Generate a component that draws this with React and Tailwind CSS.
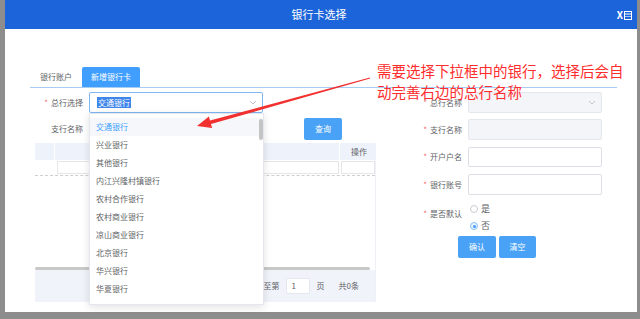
import React from "react";

// bank list shown in the open dropdown
const banks = [
  "交通银行",
  "兴业银行",
  "其他银行",
  "内江兴隆村镇银行",
  "农村合作银行",
  "农村商业银行",
  "凉山商业银行",
  "北京银行",
  "华兴银行",
  "华夏银行",
];

function Chevron({ className }) {
  return (
    <svg width="8" height="5" viewBox="0 0 8 5" className={className}>
      <path d="M1 1 L4 4 L7 1" fill="none" stroke="#c0c4cc" strokeWidth="1" />
    </svg>
  );
}

function FormLabel({ text, w }) {
  return (
    <div className={`${w} shrink-0 text-right text-[8px] text-[#606266] leading-none whitespace-nowrap`}>
      <span className="text-[#f56c6c] mr-[3px]">*</span>
      {text}
    </div>
  );
}

function RightRow({ label, disabled, select, h, mb }) {
  return (
    <div className={`flex items-center ${mb}`}>
      <FormLabel text={label} w="w-[48px]" />
      <div
        className={`ml-[6px] w-[134px] ${h} rounded-[2px] border flex items-center justify-end pr-[5px] ${
          disabled ? "bg-[#f3f5f9] border-[#e4e7ed]" : "bg-white border-[#dcdfe6]"
        }`}
      >
        {select && <Chevron />}
      </div>
    </div>
  );
}

export default function App() {
  return (
    <div className="w-[640px] h-[319px] bg-[#8d8d8d] pl-[5px] pr-[3px] overflow-hidden font-['Noto_Sans_CJK_SC',sans-serif]">
      <div className="h-[312px] bg-white flex flex-col">
        {/* title bar */}
        <div className="h-[29px] shrink-0 bg-[#1c64d9] relative flex items-center justify-center">
          <span className="text-white text-[11px] ml-[-4px]">银行卡选择</span>
          <div className="absolute right-[5px] top-[10px] flex items-center gap-[1px]">
            <span className="text-white text-[10px] font-bold leading-none">X</span>
            <svg width="8" height="9" viewBox="0 0 8 9">
              <rect x="0.5" y="0.5" width="7" height="8" fill="none" stroke="#fff" strokeWidth="1" />
              <line x1="0.5" y1="3" x2="7.5" y2="3" stroke="#fff" strokeWidth="1" />
              <line x1="0.5" y1="5.5" x2="7.5" y2="5.5" stroke="#fff" strokeWidth="0.6" />
            </svg>
          </div>
        </div>

        {/* body */}
        <div className="relative flex-1 pl-[25px] pt-[38px]">
          {/* tabs */}
          <div className="w-[587px] h-[21px] flex items-end border-b border-[#a8cdf4]">
            <div className="w-[52px] h-[20px] flex items-center justify-center text-[8px] text-[#606266]">
              银行账户
            </div>
            <div className="w-[58px] h-[20px] flex items-center justify-center text-[8px] text-white bg-[#409eff] rounded-t-[2px]">
              新增银行卡
            </div>
          </div>

          <div className="flex mt-[4px]">
            {/* left column */}
            <div className="w-[346px] shrink-0">
              <div className="flex items-center h-[21px]">
                <FormLabel text="总行选择" w="w-[53px]" />
                <div className="ml-[6px] w-[174px] h-[21px] rounded-[2px] border border-[#7fb7f2] bg-white flex items-center justify-between pl-[7px] pr-[5px]">
                  <span className="bg-[#3f86ea] text-white text-[8px] leading-[11px] px-[1px]">交通银行</span>
                  <Chevron />
                </div>
              </div>

              <div className="flex items-center h-[22px] mt-[5px]">
                <div className="w-[53px] shrink-0 text-right text-[8px] text-[#606266] whitespace-nowrap">支行名称</div>
                <div className="ml-[6px] w-[174px] h-[21px] rounded-[2px] border border-[#dcdfe6] bg-white" />
                <div className="ml-[41px] w-[38px] h-[22px] rounded-[2px] bg-[#4aa2f7] text-white text-[8px] flex items-center justify-center">
                  查询
                </div>
              </div>

              {/* table */}
              <div className="ml-[5px] mt-[3px] w-[341px] border-r border-[#eef1f6]">
                <div className="flex h-[17px] bg-[#eef3fb]">
                  <div className="w-[20px] border-r border-white" />
                  <div className="w-[285px] border-r border-white" />
                  <div className="flex-1 flex items-center justify-end pr-[8px] text-[8px] text-[#606266]">操作</div>
                </div>
                <div className="flex h-[16px] border-b border-dashed border-[#cfcfcf] py-[1px] gap-[2px]">
                  <div className="w-[20px]" />
                  <div className="w-[282px] border border-[#e6e6e6]" />
                  <div className="flex-1 border border-[#e6e6e6]" />
                </div>
                <div className="h-[91px]" />
                <div className="h-[3px] w-[335px] rounded-full bg-[#c9c9c9]" />
                <div className="h-[32px] bg-[#f0f3fa] flex items-center justify-end pr-[16px] text-[8px] text-[#606266]">
                  <span>跳至第</span>
                  <div className="ml-[6px] w-[24px] h-[16px] bg-white border border-[#e4e7ed] rounded-[2px] flex items-center pl-[5px]">1</div>
                  <span className="ml-[7px]">页</span>
                  <span className="ml-[14px]">共0条</span>
                </div>
              </div>
            </div>

            {/* right column */}
            <div className="ml-[38px]">
              <RightRow label="总行名称" disabled select h="h-[21px]" mb="mb-[6px]" />
              <RightRow label="支行名称" disabled h="h-[21px]" mb="mb-[7px]" />
              <RightRow label="开户户名" h="h-[20px]" mb="mb-[7px]" />
              <RightRow label="银行账号" h="h-[21px]" mb="mb-[8px]" />
              <div className="flex items-start">
                <div className="w-[48px] shrink-0 text-right text-[8px] text-[#606266] pt-[5px] whitespace-nowrap">
                  <span className="text-[#f56c6c] mr-[3px]">*</span>是否默认
                </div>
                <div className="ml-[8px] flex flex-col gap-[5px] text-[9px] text-[#606266]">
                  <label className="flex items-center gap-[3px] h-[12px]">
                    <span className="w-[8px] h-[8px] rounded-full border border-[#c8ccd3] bg-white" />
                    是
                  </label>
                  <label className="flex items-center gap-[3px] h-[12px]">
                    <span className="w-[8px] h-[8px] rounded-full border border-[#8cc0f5] bg-[#e8f3fe] flex items-center justify-center">
                      <span className="w-[3px] h-[3px] rounded-full bg-[#409eff]" />
                    </span>
                    否
                  </label>
                </div>
              </div>
              <div className="flex gap-[3px] ml-[44px] mt-[4px]">
                <div className="w-[38px] h-[22px] rounded-[2px] bg-[#4aa2f7] text-white text-[8px] flex items-center justify-center">确认</div>
                <div className="w-[37px] h-[22px] rounded-[2px] bg-[#4aa2f7] text-white text-[8px] flex items-center justify-center">清空</div>
              </div>
            </div>
          </div>

          {/* open dropdown */}
          <div className="absolute left-[84px] top-[84px] w-[175px] h-[192px] bg-white border border-[#e4e7ed] shadow-[0_2px_8px_rgba(0,0,0,0.12)] pt-[4px] pb-[8px]">
            {banks.map((b, i) => (
              <div
                key={b}
                className={`h-[18px] flex items-center pl-[6px] text-[8px] ${
                  i === 0 ? "bg-[#f5f7fa] text-[#409eff]" : "text-[#606266]"
                }`}
              >
                {b}
              </div>
            ))}
            <div className="absolute right-[0px] top-[5px] w-[4px] h-[21px] rounded-full bg-[#c4c4c4]" />
          </div>

          {/* annotation */}
          <div className="absolute left-[372px] top-[31px] text-[14.5px] leading-[21px] text-[#ff2d2d] whitespace-nowrap">
            需要选择下拉框中的银行，选择后会自
            <br />
            动完善右边的总行名称
          </div>
          <svg className="absolute inset-0 pointer-events-none" width="632" height="283">
            <polygon
              points="364.9,48.5 205,91.6 203.9,87.5 192,97 207.1,99 206,95 365.1,49.5"
              fill="#f23030"
            />
          </svg>
        </div>
      </div>
    </div>
  );
}
